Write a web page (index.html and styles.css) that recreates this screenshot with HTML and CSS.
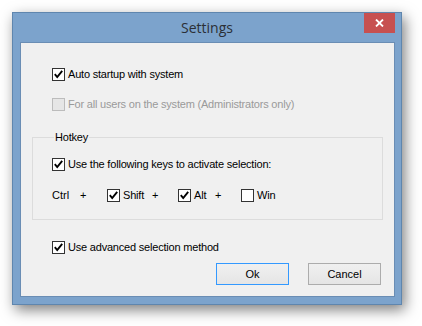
FILE: index.html
```html
<!DOCTYPE html>
<html>
<head>
<meta charset="utf-8">
<link rel="stylesheet" href="styles.css">
</head>
<body>
<div class="window">
  <div class="titlebar">
    <span class="title">Settings</span>
    <button class="close" aria-label="Close">
      <svg width="9" height="8" viewBox="0 0 9 8"><path d="M1 0.5 L8 7.5 M8 0.5 L1 7.5" stroke="#fff" stroke-width="1.8" fill="none"/></svg>
    </button>
  </div>
  <div class="client">
    <label class="check row1">
      <span class="box"><svg width="11" height="11" viewBox="0 0 11 11"><path d="M1.8 5.2 L4.2 8 L9.2 1.8" stroke="#000" stroke-width="1.9" fill="none"/></svg></span>
      <span>Auto startup with system</span>
    </label>
    <label class="check row2 disabled">
      <span class="box"></span>
      <span>For all users on the system (Administrators only)</span>
    </label>
    <fieldset class="group">
      <legend>Hotkey</legend>
      <label class="check">
        <span class="box"><svg width="11" height="11" viewBox="0 0 11 11"><path d="M1.8 5.2 L4.2 8 L9.2 1.8" stroke="#000" stroke-width="1.9" fill="none"/></svg></span>
        <span>Use the following keys to activate selection:</span>
      </label>
      <div class="keys">
        <span>Ctrl</span>
        <span>+</span>
        <label class="check">
          <span class="box"><svg width="11" height="11" viewBox="0 0 11 11"><path d="M1.8 5.2 L4.2 8 L9.2 1.8" stroke="#000" stroke-width="1.9" fill="none"/></svg></span>
          <span>Shift</span>
        </label>
        <span>+</span>
        <label class="check">
          <span class="box"><svg width="11" height="11" viewBox="0 0 11 11"><path d="M1.8 5.2 L4.2 8 L9.2 1.8" stroke="#000" stroke-width="1.9" fill="none"/></svg></span>
          <span>Alt</span>
        </label>
        <span>+</span>
        <label class="check">
          <span class="box"></span>
          <span>Win</span>
        </label>
      </div>
    </fieldset>
    <label class="check row4">
      <span class="box"><svg width="11" height="11" viewBox="0 0 11 11"><path d="M1.8 5.2 L4.2 8 L9.2 1.8" stroke="#000" stroke-width="1.9" fill="none"/></svg></span>
      <span>Use advanced selection method</span>
    </label>
    <div class="buttons">
      <button class="btn default">Ok</button>
      <button class="btn">Cancel</button>
    </div>
  </div>
</div>
</body>
</html>
```
FILE: styles.css
```css
html, body {
  margin: 0;
  padding: 0;
  background: #ffffff;
}
body {
  width: 422px;
  height: 326px;
  overflow: hidden;
  font-family: "Liberation Sans", Arial, sans-serif;
  font-size: 11px;
  color: #000;
}
.window {
  margin: 12px 0 0 12px;
  width: 390px;
  height: 293px;
  box-sizing: border-box;
  background: #7ca3cc;
  border: 1px solid #5f86ae;
  box-shadow: 3px 5px 13px rgba(0, 0, 0, 0.5);
  display: flex;
  flex-direction: column;
}
.titlebar {
  height: 29px;
  flex: none;
  display: flex;
  justify-content: center;
  align-items: flex-start;
  position: relative;
}
.title {
  font-family: "Open Sans", sans-serif;
  font-size: 14px;
  color: #2b2f36;
  line-height: 18px;
  margin-top: 6px;
}
.close {
  position: absolute;
  right: 6px;
  top: 0;
  width: 31px;
  height: 20px;
  border: 0;
  padding: 0;
  background: #c75050;
  display: flex;
  align-items: center;
  justify-content: center;
}
.client {
  flex: 1;
  margin: 0 6px 7px 7px;
  background: #f0f0f0;
  border: 1px solid #6a8db4;
  padding: 24px 13px 0 11px;
  display: flex;
  flex-direction: column;
  align-items: flex-start;
}
.check {
  display: flex;
  align-items: center;
  height: 13px;
  line-height: 13px;
  white-space: nowrap;
  letter-spacing: -0.2px;
}
.box {
  width: 13px;
  height: 13px;
  box-sizing: border-box;
  border: 1px solid #333333;
  background: #ffffff;
  margin-right: 3px;
  flex: none;
  display: flex;
}
.row1 {
  margin-left: 20px;
  margin-top: 1px;
}
.row2 {
  margin-left: 20px;
  margin-top: 17px;
}
.disabled {
  color: #9a9a9a;
}
.disabled .box {
  border-color: #bcbcbc;
  background: #e6e6e6;
}
.group {
  margin: 20px 0 0 0;
  width: 351px;
  height: 89px;
  box-sizing: border-box;
  border: 1px solid #dcdcdc;
  padding: 14px 0 0 19px;
}
.group legend {
  padding: 0 1px;
  margin-left: 2px;
  line-height: 13px;
  letter-spacing: -0.2px;
}
.keys {
  margin-top: 18px;
  display: grid;
  grid-template-columns: 28px 27px 45px 26px 37px 26px auto;
  align-items: center;
  height: 13px;
  line-height: 13px;
}
.row4 {
  margin-left: 20px;
  margin-top: 21px;
}
.buttons {
  align-self: flex-end;
  display: flex;
  gap: 19px;
  margin-top: 9px;
}
.btn {
  width: 73px;
  height: 22px;
  box-sizing: border-box;
  border: 1px solid #acacac;
  background: linear-gradient(#f0f0f0, #e5e5e5);
  font-family: "Liberation Sans", Arial, sans-serif;
  font-size: 11px;
  color: #000;
  padding: 0;
}
.btn.default {
  border-color: #3399ff;
}
```
